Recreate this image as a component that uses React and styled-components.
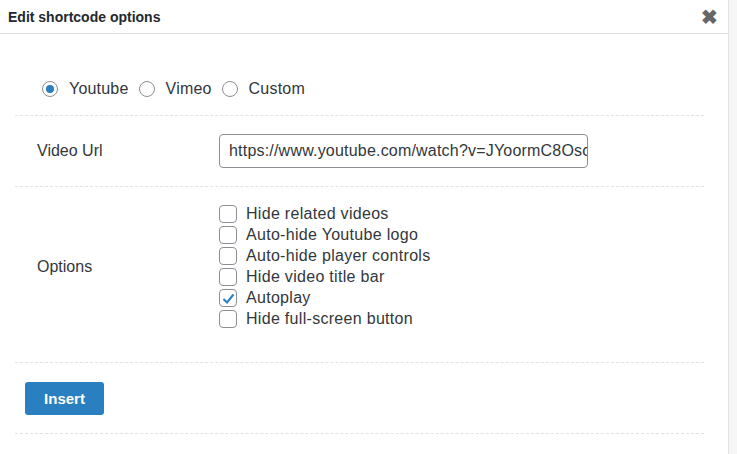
import React from "react";
import styled, { createGlobalStyle } from "styled-components";

const G = createGlobalStyle`
  body{margin:0;background:#fff;font-family:"Liberation Sans",Arial,sans-serif;color:#32373c;}
`;
const Frame = styled.div`width:737px;height:454px;display:flex;overflow:hidden;`;
const Dialog = styled.div`flex:1;display:flex;flex-direction:column;`;
const Scroll = styled.div`width:8px;background:#f6f6f6;border-left:1px solid #e2e2e2;`;
const Header = styled.div`height:33px;border-bottom:1px solid #dcdcdc;display:flex;align-items:center;justify-content:space-between;padding:0 10px 0 8px;`;
const Title = styled.div`font-size:14px;font-weight:bold;color:#23282d;`;
const Close = styled.div`font-size:20px;font-weight:bold;color:#666;line-height:1;`;
const Body = styled.div`padding:0 24px 0 15px;`;
const Section = styled.div`border-bottom:1px dashed #e3e3e3;display:flex;align-items:center;box-sizing:border-box;height:${p=>p.h}px;padding:${p=>p.pad||"0"};`;
const Label = styled.div`width:182px;padding-left:22px;font-size:16px;`;
const RadioItem = styled.label`display:flex;align-items:center;font-size:16px;margin-right:10px;gap:11px;letter-spacing:0.2px;`;
const Radio = styled.span`width:16px;height:16px;border:1px solid #8c8f94;border-radius:50%;box-sizing:border-box;display:flex;align-items:center;justify-content:center;
  &::after{content:"";width:8px;height:8px;border-radius:50%;background:${p=>p.on?"#2a7fc0":"transparent"};}`;
const Input = styled.div`width:369px;height:34px;box-sizing:border-box;border:1px solid #8c8f94;border-radius:4px;padding:0 9px;display:flex;align-items:center;font-size:16px;letter-spacing:0.2px;white-space:nowrap;overflow:hidden;`;
const List = styled.div`display:flex;flex-direction:column;`;
const CheckRow = styled.div`display:flex;align-items:center;height:21px;gap:9px;font-size:16px;letter-spacing:0.3px;`;
const Box = styled.span`width:18px;height:18px;border:1px solid #8c8f94;border-radius:4px;box-sizing:border-box;display:flex;align-items:center;justify-content:center;`;
const Btn = styled.button`margin-left:10px;width:79px;height:33px;border:none;border-radius:3px;background:#2a7fc0;color:#fff;font-family:inherit;font-size:15px;font-weight:bold;`;

const opts=[["Hide related videos"],["Auto-hide Youtube logo"],["Auto-hide player controls"],["Hide video title bar"],["Autoplay",1],["Hide full-screen button"]];

export default function App(){
  return <Frame><G/><Dialog>
    <Header><Title>Edit shortcode options</Title><Close>✖</Close></Header>
    <Body>
      <Section h={82} pad="28px 0 0 27px">
        <RadioItem><Radio on/>Youtube</RadioItem>
        <RadioItem><Radio/>Vimeo</RadioItem>
        <RadioItem><Radio/>Custom</RadioItem>
      </Section>
      <Section h={71}><Label>Video Url</Label><Input>https://www.youtube.com/watch?v=JYoormC8Osc</Input></Section>
      <Section h={176} pad="17px 0 33px 0"><Label>Options</Label><List>
        {opts.map(([t,c])=><CheckRow key={t}><Box>{c&&<svg width="13" height="11" viewBox="0 0 13 11"><path d="M1.5 6l3.5 3.5L11.5 1.5" fill="none" stroke="#2a7fc0" strokeWidth="2"/></svg>}</Box>{t}</CheckRow>)}
      </List></Section>
      <Section h={71}><Btn>Insert</Btn></Section>
    </Body>
  </Dialog><Scroll/></Frame>;
}
